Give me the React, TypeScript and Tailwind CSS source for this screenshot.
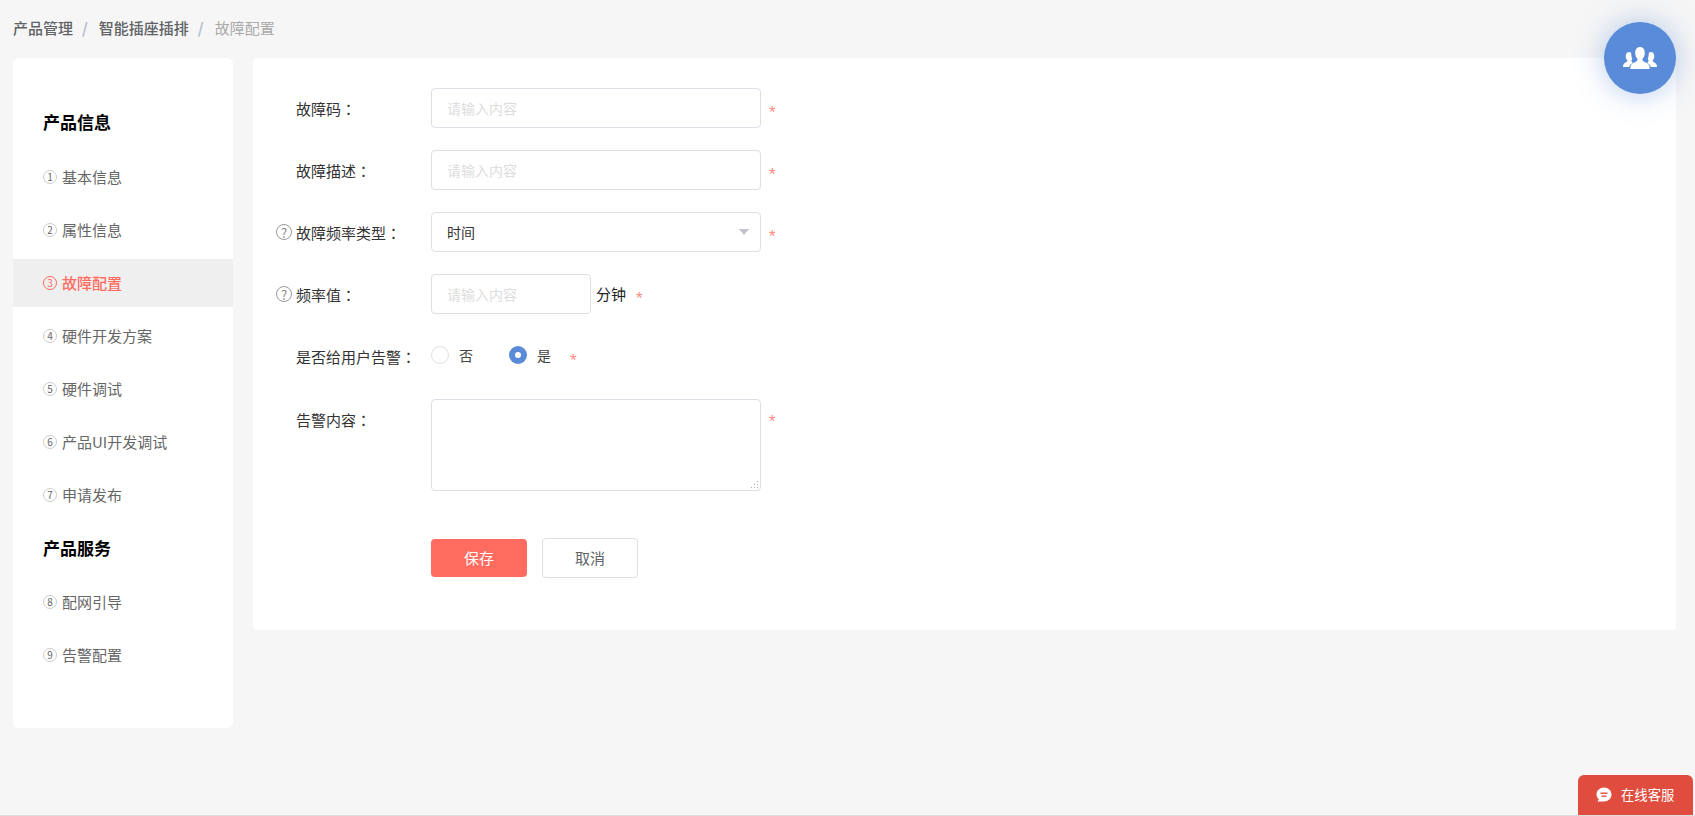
import React from "react";

const font = { fontFamily: '"Microsoft YaHei","Noto Sans CJK SC","Liberation Sans",sans-serif' };

function SideItem({ n, label, active }: { n: number; label: string; active?: boolean }) {
  return (
    <div className={active ? "h-[48px] mb-[5px] flex items-center pl-[30px] bg-[#efefef] text-[#ff6c5f] font-medium" : "h-[48px] mb-[5px] flex items-center pl-[30px] text-[#666666]"}>
      <span className={active ? "w-[14px] h-[14px] mr-[5px] rounded-full border border-[#ff6c5f] flex items-center justify-center text-[10px] leading-none font-normal" : "w-[14px] h-[14px] mr-[5px] rounded-full border border-[#cccccc] flex items-center justify-center text-[10px] leading-none"}>{n}</span>
      <span className="text-[15px] leading-none mb-[2px]">{label}</span>
    </div>
  );
}

function Help() {
  return (
    <span className="w-[16px] h-[16px] rounded-full border border-[#999999] text-[#888888] flex items-center justify-center text-[13px] leading-none shrink-0">?</span>
  );
}

function Star({ cls }: { cls?: string }) {
  return <span className={"text-[#ff8a80] text-[17px] leading-none font-['Liberation_Sans'] " + (cls ?? "ml-[8px] mt-[9px]")}>*</span>;
}

function Row({ label, help, children, top }: { label: string; help?: boolean; children: React.ReactNode; top?: boolean }) {
  return (
    <div className={top ? "flex items-start" : "flex items-center"}>
      <div className={top ? "w-[156px] pl-[1px] flex items-center text-[15px] text-[#333333] leading-none shrink-0 pt-[13px]" : "w-[156px] pl-[1px] flex items-center text-[15px] text-[#333333] leading-none shrink-0"}>
        <span className="w-[20px] flex items-center shrink-0">{help && <Help />}</span>
        <span>{label}<span className="font-['Noto_Sans_CJK_TC']">：</span></span>
      </div>
      {children}
    </div>
  );
}

function TextInput({ width }: { width: string }) {
  return (
    <input
      placeholder="请输入内容"
      className={width + " h-[40px] rounded-[4px] border border-[#dcdfe6] bg-white px-[15px] text-[14px] outline-none placeholder:text-[#dddddd]"}
    />
  );
}

function People() {
  return (
    <svg width="34" height="23" viewBox="0 0 34 23" fill="#ffffff">
      <path d="M17 0c-3 0-4.800 2.300-4.800 6 0 2.500 1 4.600 2.300 5.800.2 1.400-.3 2.200-1.300 2.800-1.800 1-4.900 1.900-5.500 4.200-.2 1-.3 2.100-.3 3.200h19.200c0-1.100-.1-2.200-.3-3.200-.6-2.300-3.700-3.200-5.500-4.200-1-.6-1.500-1.400-1.300-2.800 1.300-1.200 2.300-3.300 2.300-5.800C21.800 2.300 20 0 17 0z" />
      <path d="M6.300 5c-2.300 0-3.600 1.800-3.600 4.200 0 1.800.7 3.200 1.600 4.100.1 1-.5 1.500-1.200 1.900C1.800 16 .5 16.500.2 18.200c-.1.500-.2 1.100-.2 1.800h6.200c.3-2 2.100-3.300 3.500-4.100-.6-.4-1.100-.9-1.200-1.800 0-.4 0-.8.100-1.200.3-.3.500-.7.700-1.100-.7-1.300-1.100-3-1-4.800-.1-.6-.3-1.100-.6-1.400C7.300 5.200 6.800 5 6.300 5z" />
      <path d="M27.700 5c2.300 0 3.600 1.800 3.600 4.200 0 1.800-.7 3.200-1.600 4.100-.1 1 .5 1.500 1.200 1.900 1.300.8 2.600 1.300 2.900 3 .1.500.2 1.100.2 1.800h-6.200c-.3-2-2.100-3.300-3.500-4.100.6-.4 1.100-.9 1.200-1.800 0-.4 0-.8-.1-1.200-.3-.3-.5-.7-.7-1.100.7-1.300 1.100-3 1-4.800.1-.6.3-1.100.6-1.400.4-.4.900-.6 1.400-.6z" />
    </svg>
  );
}

function Chat() {
  return (
    <svg width="16" height="16" viewBox="0 0 16 16">
      <path fill="#ffffff" d="M8 .5c4.200 0 7.500 3 7.500 7s-3.300 7-7.500 7H1.500l1.300-2.200C1.300 11 .5 9.400.5 7.500c0-4 3.300-7 7.500-7z" />
      <rect x="4.500" y="5.500" width="7" height="1.400" fill="#e04c3e" />
      <rect x="5.500" y="8.500" width="5" height="1.400" fill="#e04c3e" />
    </svg>
  );
}

export default function App() {
  return (
    <div style={font} className="relative h-[816px] bg-[#f6f6f6] overflow-hidden border-b border-[#dddddd]">
      <div className="h-[58px] pl-[13px] pb-[4px] flex items-center text-[15px] leading-none">
        <span className="text-[#606266] font-medium">产品管理</span>
        <span className="text-[#b4bccc] ml-[9px] mr-[11px] font-bold">/</span>
        <span className="text-[#606266] font-medium">智能插座插排</span>
        <span className="text-[#b4bccc] ml-[9px] mr-[11px] font-bold">/</span>
        <span className="text-[#aaaaaa]">故障配置</span>
      </div>

      <div className="flex items-start pl-[13px] pr-[19px] gap-[20px]">
        <aside className="w-[220px] h-[670px] shrink-0 bg-white rounded-[6px] pt-[42px]">
          <div className="h-[45px] mb-[8px] pb-[2px] flex items-center pl-[30px] text-[17px] font-bold text-black leading-none">产品信息</div>
          <SideItem n={1} label="基本信息" />
          <SideItem n={2} label="属性信息" />
          <SideItem n={3} label="故障配置" active />
          <SideItem n={4} label="硬件开发方案" />
          <SideItem n={5} label="硬件调试" />
          <SideItem n={6} label="产品UI开发调试" />
          <SideItem n={7} label="申请发布" />
          <div className="h-[45px] mt-[6px] mb-[8px] flex items-center pl-[30px] text-[17px] font-bold text-black leading-none">产品服务</div>
          <SideItem n={8} label="配网引导" />
          <SideItem n={9} label="告警配置" />
        </aside>

        <main className="flex-1 h-[572px] bg-white rounded-[4px] pt-[30px] flex flex-col gap-[22px] pl-[22px]">
          <Row label="故障码">
            <TextInput width="w-[330px]" />
            <Star />
          </Row>
          <Row label="故障描述">
            <TextInput width="w-[330px]" />
            <Star />
          </Row>
          <Row label="故障频率类型" help>
            <div className="w-[330px] h-[40px] rounded-[4px] border border-[#dcdfe6] bg-white pl-[15px] pr-[11px] flex items-center justify-between text-[14px] text-[#333333]">
              <span>时间</span>
              <span className="w-0 h-0 border-x-[5px] border-x-transparent border-t-[6px] border-t-[#c0c4cc]" />
            </div>
            <Star />
          </Row>
          <Row label="频率值" help>
            <TextInput width="w-[160px]" />
            <span className="ml-[5px] text-[15px] text-[#222222]">分钟</span>
            <Star cls="ml-[10px] mt-[9px]" />
          </Row>
          <div className="h-[41px] flex flex-col justify-center">
            <Row label="是否给用户告警">
              <div className="flex items-center text-[14px] text-[#444444] leading-none">
                <span className="w-[18px] h-[18px] mb-[3px] rounded-full border border-[#dcdfe6] bg-white" />
                <span className="ml-[10px] mr-[36px] mb-[3px]">否</span>
                <span className="w-[18px] h-[18px] mb-[3px] rounded-full bg-[#5a8bd8] flex items-center justify-center">
                  <span className="w-[6px] h-[6px] rounded-full bg-white" />
                </span>
                <span className="ml-[10px] mr-[19px] mb-[3px]">是</span>
                <Star cls="mt-[7px]" />
              </div>
            </Row>
          </div>
          <Row label="告警内容" top>
            <div className="relative w-[330px] h-[92px] rounded-[4px] border border-[#dcdfe6] bg-white">
              <svg className="absolute right-[1px] bottom-[1px]" width="8" height="8" viewBox="0 0 8 8" fill="#aaaaaa">
                <rect x="6" y="0" width="1" height="1" />
                <rect x="6" y="3" width="1" height="1" />
                <rect x="3" y="3" width="1" height="1" />
                <rect x="6" y="6" width="1" height="1" />
                <rect x="3" y="6" width="1" height="1" />
                <rect x="0" y="6" width="1" height="1" />
              </svg>
            </div>
            <Star cls="ml-[8px] mt-[14px]" />
          </Row>
          <div className="flex items-start pl-[156px] pt-[25px]">
            <button className="w-[96px] h-[38px] mt-[1px] rounded-[4px] bg-[#ff6c5f] text-white text-[15px]">保存</button>
            <button className="w-[96px] h-[40px] ml-[15px] rounded-[4px] border border-[#dcdfe6] bg-white text-[#606266] text-[15px]">取消</button>
          </div>
        </main>
      </div>

      <div className="absolute left-[1604px] top-[22px] w-[72px] h-[72px] rounded-full bg-[#5a8bd8] shadow-[0_0_30px_rgba(90,139,216,0.45)] flex items-center justify-center">
        <People />
      </div>

      <div className="absolute left-[1578px] top-[775px] w-[115px] h-[40px] rounded-t-[6px] bg-[#e04c3e] flex items-center pl-[18px] gap-[9px] text-white text-[13.33px] leading-none">
        <Chat />
        <span>在线客服</span>
      </div>
    </div>
  );
}
